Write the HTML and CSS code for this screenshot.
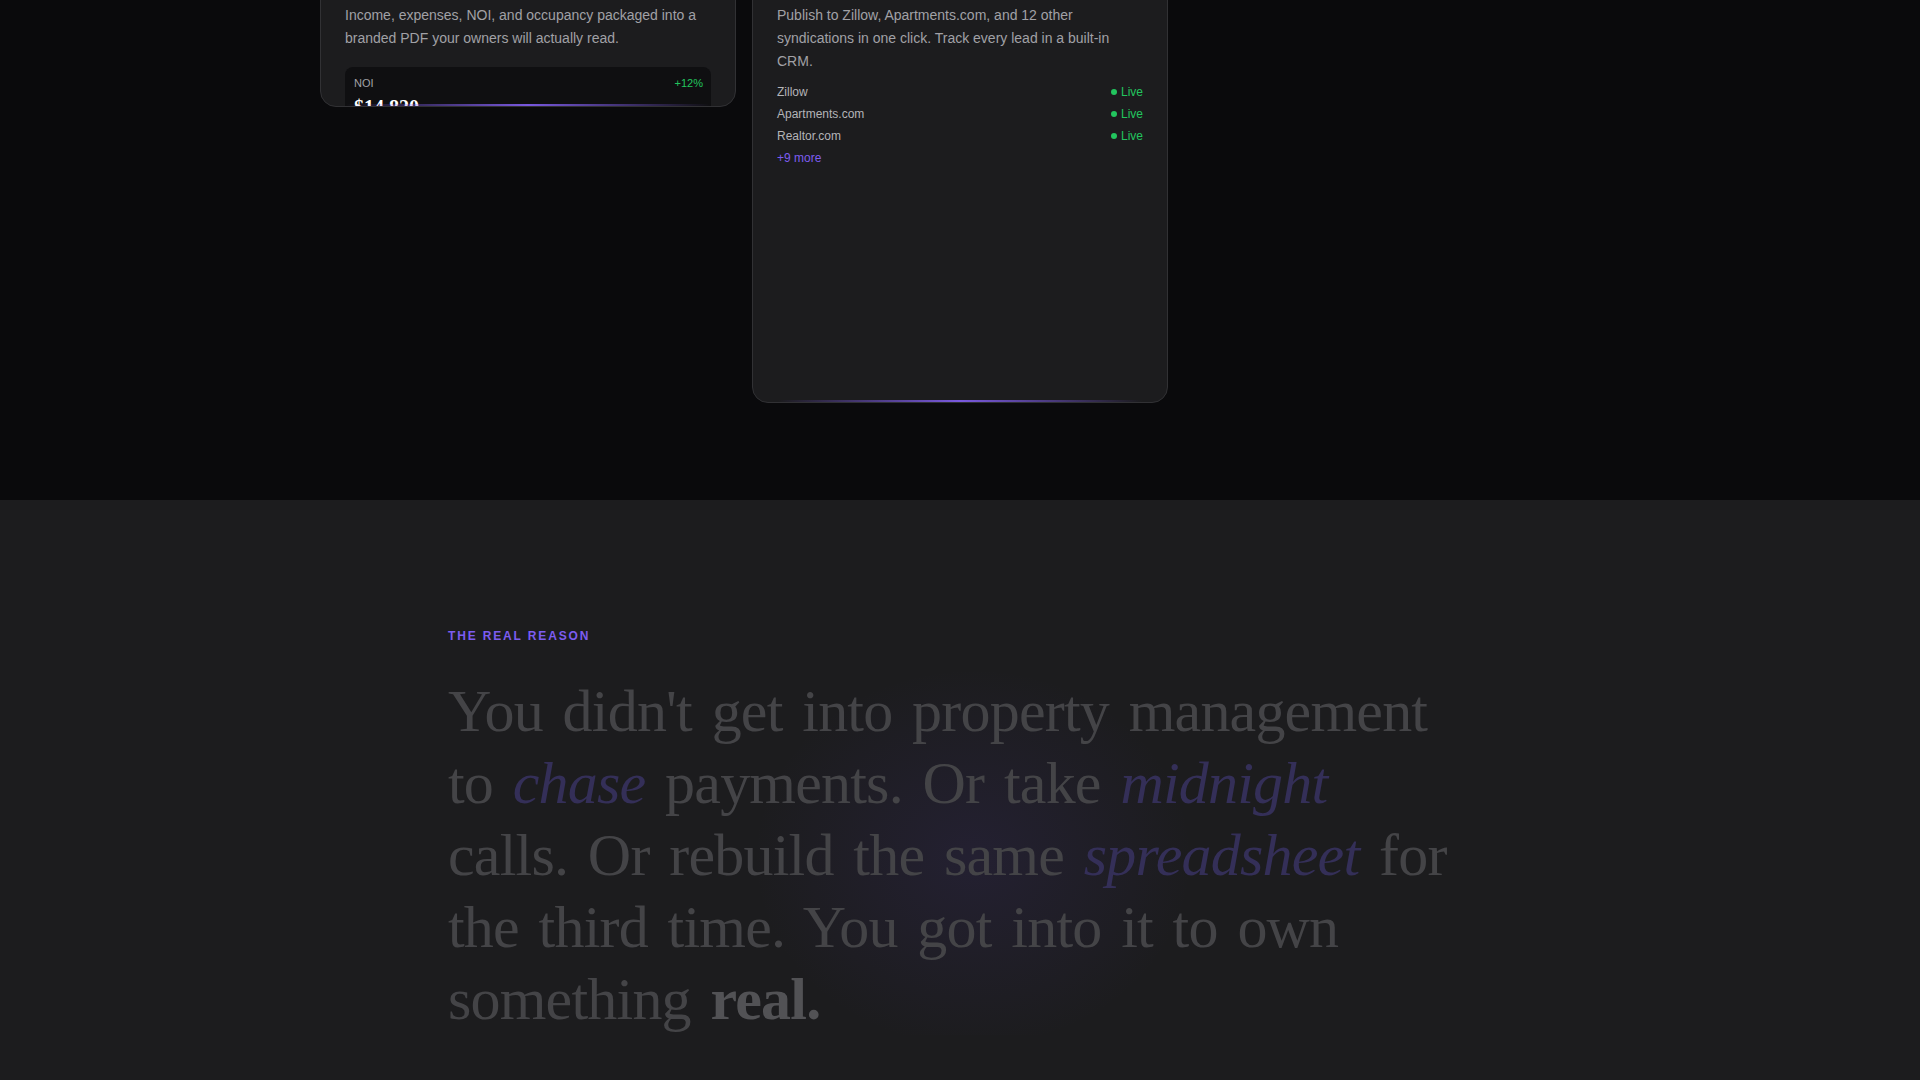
FILE: index.html
```html
<!DOCTYPE html>
<html lang="en">
<head>
    <meta charset="UTF-8">
    <meta name="viewport" content="width=device-width, initial-scale=1.0">
    <title>Property management, without the busywork</title>
    <link rel="stylesheet" href="styles.css">
</head>
<body>

<section class="features">
    <div class="feature-grid">
        <div class="card card-short">
            <div class="card-icon">
                <svg width="20" height="20" viewBox="0 0 24 24" fill="none" stroke="currentColor" stroke-width="2" stroke-linecap="round" stroke-linejoin="round">
                    <path d="M14 2H6a2 2 0 0 0-2 2v16a2 2 0 0 0 2 2h12a2 2 0 0 0 2-2V8z"/>
                    <path d="M14 2v6h6"/>
                </svg>
            </div>
            <h3>Owner reports</h3>
            <p>Income, expenses, NOI, and occupancy packaged into a branded PDF your owners will actually read.</p>
            <div class="metric">
                <div class="metric-head">
                    <span>NOI</span>
                    <span class="up">+12%</span>
                </div>
                <div class="metric-value">$14,820</div>
            </div>
        </div>

        <div class="card card-tall">
            <div class="card-icon">
                <svg width="20" height="20" viewBox="0 0 24 24" fill="none" stroke="currentColor" stroke-width="2" stroke-linecap="round" stroke-linejoin="round">
                    <path d="M3 10l9-7 9 7v10a1 1 0 0 1-1 1H4a1 1 0 0 1-1-1z"/>
                </svg>
            </div>
            <h3>Listings &amp; leads</h3>
            <p>Publish to Zillow, Apartments.com, and 12 other syndications in one click. Track every lead in a built-in CRM.</p>
            <ul class="channels">
                <li><span>Zillow</span><span class="live">Live</span></li>
                <li><span>Apartments.com</span><span class="live">Live</span></li>
                <li><span>Realtor.com</span><span class="live">Live</span></li>
                <li class="more">+9 more</li>
            </ul>
        </div>
    </div>
</section>

<section class="reason">
    <div class="reason-inner">
        <div class="eyebrow">THE REAL REASON</div>
        <p class="statement">
            You didn't get into property management to <em>chase</em> payments. Or take <em>midnight</em>
            calls. Or rebuild the same <em>spreadsheet</em> for the third time. You got into it to own
            something <strong>real.</strong>
        </p>
    </div>
</section>

</body>
</html>
```

FILE: styles.css
```css
body {
    margin: 0;
    background-color: #0a0a0c;
    font-family: "Liberation Sans", Arial, sans-serif;
}

/* Feature cards */
.features {
    height: 500px;
    overflow: hidden;
    background-color: #0a0a0c;
}

.feature-grid {
    max-width: 1280px;
    margin: -113px auto 0;
    display: grid;
    grid-template-columns: repeat(3, 1fr);
    gap: 16px;
    align-items: start;
}

.card {
    position: relative;
    box-sizing: border-box;
    background: #1c1c1e;
    border: 1px solid #313134;
    border-radius: 16px;
    padding: 24px;
    overflow: hidden;
}

/* purple glow line along the bottom edge */
.card::after {
    content: "";
    position: absolute;
    left: 6%;
    right: 6%;
    bottom: 0;
    height: 2px;
    background: linear-gradient(90deg, transparent, rgba(132, 96, 245, 0.9), transparent);
}

.card-short {
    height: 220px;
}

.card-tall {
    height: 516px;
}

.card-icon {
    width: 40px;
    height: 40px;
    border-radius: 10px;
    background: #2a2540;
    color: #8b6cf5;
    display: flex;
    align-items: center;
    justify-content: center;
    margin-bottom: 16px;
}

.card h3 {
    margin: 0 0 8px;
    font-size: 18px;
    line-height: 28px;
    color: #f2f2f3;
}

.card p {
    margin: 0;
    font-size: 14px;
    line-height: 23px;
    color: #a1a1a6;
}

.metric {
    margin-top: 17px;
    background: #0f0f11;
    border-radius: 8px;
    padding: 8px 8px 8px 9px;
}

.metric-head {
    display: flex;
    justify-content: space-between;
    font-size: 11px;
    line-height: 16px;
    color: #a1a1a6;
}

.up {
    color: #22c55e;
}

.metric-value {
    margin-top: 2px;
    font-family: "Liberation Serif", "Times New Roman", serif;
    font-weight: bold;
    font-size: 20px;
    line-height: 28px;
    color: #ffffff;
}

.channels {
    list-style: none;
    margin: 8px 0 0;
    padding: 0;
}

.channels li {
    display: flex;
    justify-content: space-between;
    font-size: 12px;
    line-height: 22px;
    color: #b4b4b8;
}

.live {
    display: flex;
    align-items: center;
    gap: 4px;
    color: #22c55e;
}

.live::before {
    content: "";
    width: 6px;
    height: 6px;
    border-radius: 50%;
    background: #22c55e;
}

.channels .more {
    color: #7c5cf0;
}

/* "The real reason" statement */
.reason {
    background-color: #1c1c1e;
    padding: 128px 0;
}

.reason-inner {
    max-width: 1024px;
    margin: 0 auto;
    background: radial-gradient(ellipse 220px 190px at 525px 230px, rgba(90, 62, 190, 0.12), transparent);
}

.eyebrow {
    font-size: 12px;
    line-height: 16px;
    font-weight: bold;
    letter-spacing: 1.85px;
    color: #7c5cf0;
    margin-bottom: 31px;
}

.statement {
    max-width: 1008px;
    margin: 0;
    font-family: "Liberation Serif", "Times New Roman", serif;
    font-size: 60px;
    line-height: 72px;
    letter-spacing: -0.8px;
    word-spacing: 5.5px;
    color: #444447;
}

.statement em {
    color: #342f58;
}

.statement strong {
    color: #525255;
}
```
